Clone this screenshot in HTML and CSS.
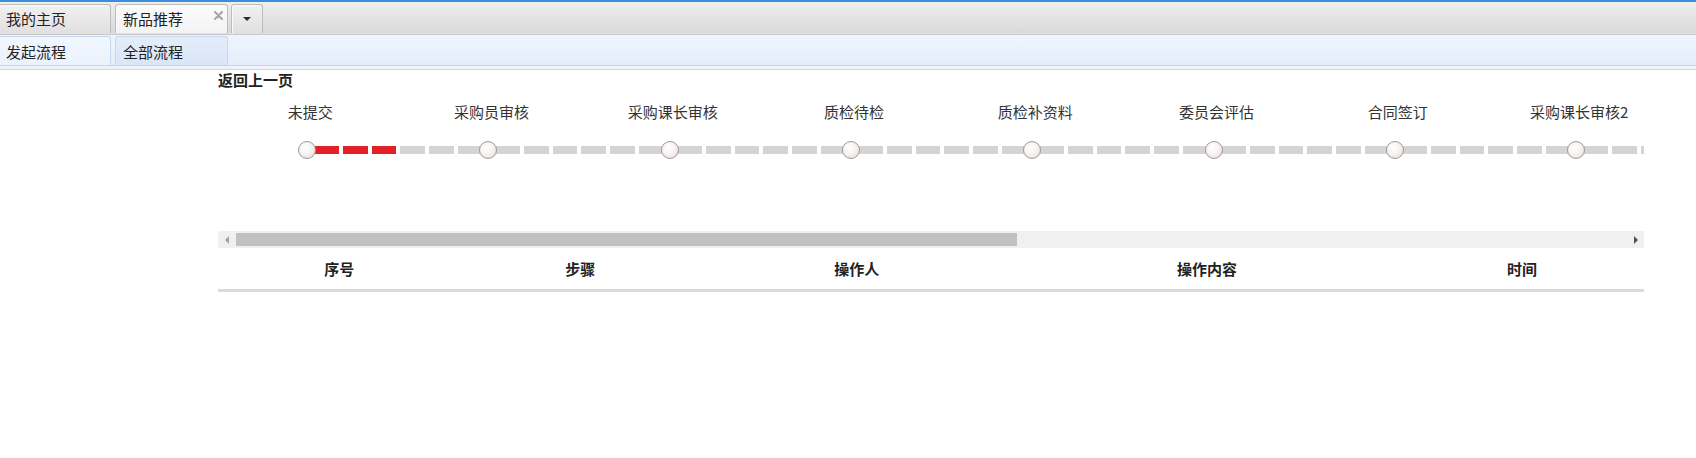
FILE: index.html
```html
<!DOCTYPE html>
<html lang="zh-CN">
<head>
<meta charset="utf-8">
<title>新品推荐</title>
<link rel="stylesheet" href="styles.css">
</head>
<body>
<div class="topline"></div>
<div class="tabstrip">
  <div class="tab">我的主页</div>
  <div class="tab active">新品推荐<span class="tab-close"><svg width="9" height="9" viewBox="0 0 9 9"><path d="M1 1L8 8M8 1L1 8" stroke="#a9a9a9" stroke-width="2.2" stroke-linecap="round"/></svg></span></div>
  <div class="tab tab-more"><span class="caret"></span></div>
</div>
<div class="subbar">
  <div class="subtabs">
    <div class="subtab">发起流程</div>
    <div class="subtab alt">全部流程</div>
  </div>
</div>
<div class="content">
  <div class="back">返回上一页</div>
  <div class="flow">
    <div class="steps">
      <div class="step current"><div class="step-label">未提交</div><div class="step-node"></div></div>
      <div class="step"><div class="step-label">采购员审核</div><div class="step-node"></div></div>
      <div class="step"><div class="step-label">采购课长审核</div><div class="step-node"></div></div>
      <div class="step"><div class="step-label">质检待检</div><div class="step-node"></div></div>
      <div class="step"><div class="step-label">质检补资料</div><div class="step-node"></div></div>
      <div class="step"><div class="step-label">委员会评估</div><div class="step-node"></div></div>
      <div class="step"><div class="step-label">合同签订</div><div class="step-node"></div></div>
      <div class="step"><div class="step-label">采购课长审核2</div><div class="step-node"></div></div>
    </div>
  </div>
  <div class="hscroll">
    <div class="sb-btn"><span class="arr-left"></span></div>
    <div class="sb-track"><div class="sb-thumb"></div></div>
    <div class="sb-btn"><span class="arr-right"></span></div>
  </div>
  <table class="log">
    <thead>
      <tr>
        <th class="c-no">序号</th>
        <th class="c-step">步骤</th>
        <th class="c-user">操作人</th>
        <th class="c-body">操作内容</th>
        <th class="c-time">时间</th>
      </tr>
    </thead>
  </table>
</div>
</body>
</html>
```
FILE: styles.css
```css
html, body {
  margin: 0;
  padding: 0;
  background: #fff;
}
body {
  font-family: "Noto Sans CJK SC", "Noto Sans", "Liberation Sans", sans-serif;
  font-size: 15px;
  color: #222;
  overflow: hidden;
}
.topline {
  height: 2px;
  background: #3d8ddd;
}
.tabstrip {
  display: flex;
  gap: 4px;
  padding: 2px 0 0 0;
  margin-left: -2px;
  height: 29px;
  background: linear-gradient(#efefef, #d9d9d9);
  border-bottom: 1px solid #e3e3e3;
}
.tab {
  position: relative;
  box-sizing: border-box;
  width: 113px;
  height: 29px;
  padding-left: 7px;
  line-height: 27px;
  border: 1px solid #bcbcbc;
  border-bottom: none;
  border-radius: 3px 3px 0 0;
  background: linear-gradient(#f1f1f1, #e0e0e0);
  box-shadow: inset 1px 1px 0 #fafafa;
  color: #222;
}
.tab.active {
  background: linear-gradient(#fbfbfb, #f3f3f3);
}
.tab-close {
  position: absolute;
  right: 4px;
  top: 6px;
  width: 9px;
  height: 9px;
  line-height: 0;
}
.tab-more {
  width: 32px;
  margin-left: -1px;
  padding: 0;
  display: flex;
  justify-content: center;
  align-items: flex-start;
}
.caret {
  margin-top: 12px;
  width: 0;
  height: 0;
  border-left: 4px solid transparent;
  border-right: 4px solid transparent;
  border-top: 4px solid #1d2f48;
}
.subbar {
  border-top: 1px solid #c7c7c7;
  border-bottom: 1px solid #c6d8ec;
  padding-bottom: 3px;
  background: #eef3fa;
}
.subtabs {
  display: flex;
  gap: 4px;
  margin-left: -2px;
  padding-top: 1px;
  height: 29px;
  background: linear-gradient(#eff5ff, #e4edfb);
  border-bottom: 1px solid #c3d5ef;
}
.subtab {
  box-sizing: border-box;
  width: 113px;
  height: 29px;
  padding-left: 7px;
  line-height: 30px;
  border: 1px solid #c6d7ee;
  border-bottom: none;
  border-radius: 3px 3px 0 0;
  background: linear-gradient(#f1f7ff, #eaf2fd);
  color: #222;
}
.subtab.alt {
  background: linear-gradient(#e3edfb, #d9e6f8);
}
.content {
  margin-left: 218px;
  width: 1426px;
}
.back {
  font-weight: bold;
  line-height: 20px;
  color: #222;
}
.flow {
  height: 129px;
  padding-top: 12px;
  overflow: hidden;
}
.steps {
  display: flex;
}
.step {
  flex: 0 0 181.29px;
  position: relative;
  display: flex;
  flex-direction: column;
  align-items: center;
}
.step::before,
.step.current::after {
  content: "";
  position: absolute;
  left: calc(50% + 5.5px);
  top: 44px;
  width: 181.29px;
  height: 8px;
  background: repeating-linear-gradient(90deg, #d4d4d4 0 24.8px, transparent 24.8px 28.8px);
}
.step.current::after {
  width: 82.4px;
  background: repeating-linear-gradient(90deg, #e32026 0 24.8px, transparent 24.8px 28.8px);
}
.step-label {
  line-height: 20px;
  height: 20px;
  white-space: nowrap;
  color: #333;
  padding-left: 3px;
}
.step-node {
  position: relative;
  z-index: 1;
  box-sizing: border-box;
  margin-top: 19px;
  margin-right: 3px;
  width: 18px;
  height: 18px;
  border-radius: 50%;
  border: 1.5px solid #9f9a98;
  background: radial-gradient(circle at 40% 35%, #ffffff 0, #f7f3f1 45%, #e2d9d5 100%);
}
.hscroll {
  display: flex;
  height: 17px;
  background: #f0f0f0;
}
.sb-btn {
  flex: 0 0 17px;
  display: flex;
  align-items: center;
  justify-content: center;
}
.arr-left {
  width: 0;
  height: 0;
  border-top: 4px solid transparent;
  border-bottom: 4px solid transparent;
  border-right: 4px solid #a3a3a3;
}
.arr-right {
  width: 0;
  height: 0;
  border-top: 4px solid transparent;
  border-bottom: 4px solid transparent;
  border-left: 4px solid #505050;
}
.sb-track {
  flex: 1;
  padding: 2px 0 2px 1px;
}
.sb-thumb {
  width: 781px;
  height: 13px;
  background: #c1c1c1;
}
.log {
  width: 100%;
  border-collapse: collapse;
  border-spacing: 0;
  table-layout: fixed;
}
.log th {
  height: 41px;
  padding: 0;
  font-weight: bold;
  font-size: 15px;
  color: #222;
  text-align: center;
  vertical-align: middle;
  border-bottom: 3px solid #dadada;
}
.c-no { width: 17%; }
.c-step { width: 16.8%; }
.c-user { width: 22%; }
.c-body { width: 27.1%; }
.c-time { width: 17.1%; }
```
